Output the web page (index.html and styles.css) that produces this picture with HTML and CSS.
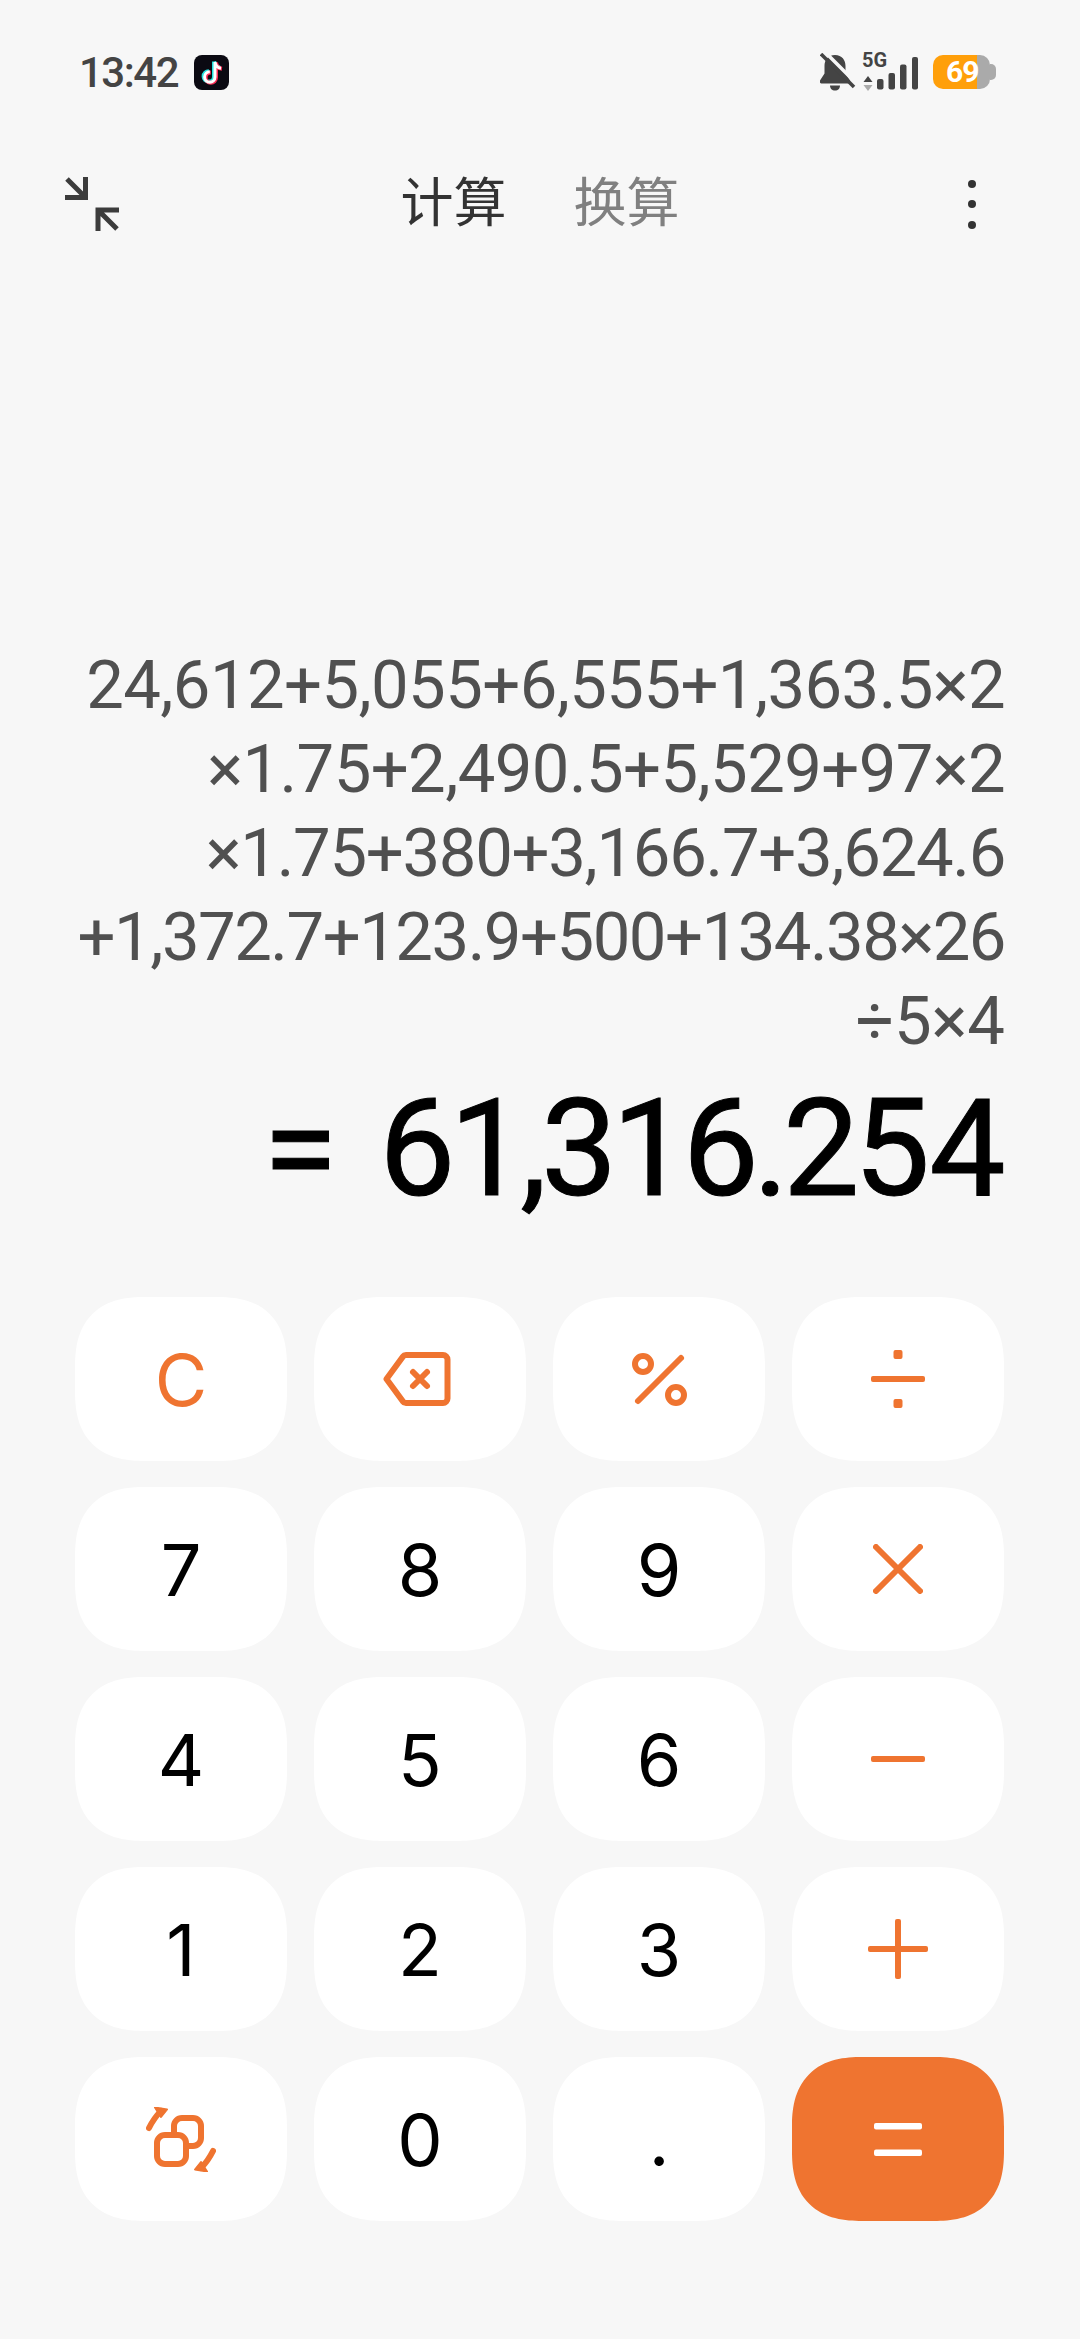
FILE: index.html
```html
<!DOCTYPE html>
<html lang="zh-CN">
  <head>
    <meta charset="UTF-8" />
    <meta name="viewport" content="width=device-width, initial-scale=1.0" />
    <title>计算器</title>
    <link rel="stylesheet" href="styles.css">
  </head>
  <body>
    <div class="status-bar">
      <div class="status-left">
        <span class="time">13:42</span>
        <svg class="app-icon" width="35" height="35" viewBox="0 0 35 35">
          <rect width="35" height="35" rx="8" fill="#0b0a12" />
          <path d="M21 7v15a5.200 5.200 0 1 1-5.200-5.200M21 7c.5 3.600 2.600 5.800 6 6.200" fill="none" stroke="#25e4e0" stroke-width="4" transform="translate(-1 -.6)" />
          <path d="M21 7v15a5.200 5.200 0 1 1-5.200-5.200M21 7c.5 3.600 2.600 5.800 6 6.200" fill="none" stroke="#fa2d55" stroke-width="4" transform="translate(1 .6)" />
          <path d="M21 7v15a5.200 5.200 0 1 1-5.200-5.200M21 7c.5 3.600 2.600 5.800 6 6.200" fill="none" stroke="#fff" stroke-width="3" />
        </svg>
      </div>
      <div class="status-right">
        <svg class="bell" width="36" height="38" viewBox="0 0 36 38">
          <path d="M15 2c-7 0-10.500 5-10.500 11v7.500L0 27.500c-.5 1.500 0 3 2 3h26c2 0 2.500-1.500 2-3l-4.500-7V13C25.500 7 22 2 15 2z" fill="#444" />
          <path d="M10 32.500h10c0 3-2 5-5 5s-5-2-5-5z" fill="#444" />
          <path d="M4.500 -1.500l34 34" stroke="#f7f7f7" stroke-width="3.500" />
          <path d="M1 1l33 33" stroke="#444" stroke-width="3.500" />
        </svg>
        <div class="network">
          <span class="net-type">5G</span>
          <svg width="56" height="38" viewBox="0 0 56 38">
            <path d="M6 23l4.500 6h-9z" fill="#444" />
            <path d="M6 38l-4.500-6h9z" fill="#aaa" />
            <rect x="15" y="26" width="6.500" height="10.500" rx="2" fill="#444" />
            <rect x="26.500" y="20" width="6.500" height="16.500" rx="2" fill="#444" />
            <rect x="38" y="11.500" width="6.500" height="25" rx="2" fill="#444" />
            <rect x="50" y="4" width="6" height="32.500" rx="2" fill="#444" />
          </svg>
        </div>
        <div class="battery"><span>69</span></div>
      </div>
    </div>

    <header class="top-bar">
      <svg class="collapse" width="54" height="54" viewBox="0 0 54 54">
        <path d="M2 2l18 18M20.500 0v20.500H0M33 54V33h21M33.500 33.500L52 52" fill="none" stroke="#3c3c3c" stroke-width="5" />
      </svg>
      <nav class="tabs">
        <a class="tab active" href="#">计算</a>
        <a class="tab" href="#">换算</a>
      </nav>
      <div class="more"><i></i><i></i><i></i></div>
    </header>

    <main class="display">
      <div class="expression">
        <div class="tight-sm">24,612+5,055+6,555+1,363.5×2</div>
        <div class="tight-sm">×1.75+2,490.5+5,529+97×2</div>
        <div class="tight-lg">×1.75+380+3,166.7+3,624.6</div>
        <div class="tight-xl">+1,372.7+123.9+500+134.38×26</div>
        <div>÷5×4</div>
      </div>
      <div class="result"><span class="result-eq">=</span>61,316.25<span class="result-last">4</span></div>
    </main>

    <section class="keypad">
      <button class="key op">C</button>
      <button class="key back">
        <svg width="68" height="54" viewBox="0 0 68 54" fill="none" stroke="#ef7430" stroke-linecap="round" stroke-linejoin="round">
          <path d="M3.500 27L20 4.500c.6-.9 1.500-1.500 3-1.500h37c2.500 0 4.500 2 4.500 4.500v39c0 2.500-2 4.500-4.500 4.500H23c-1.500 0-2.400-.6-3-1.500z" stroke-width="6" />
          <path d="M30 20l14 14M44 20L30 34" stroke-width="6" />
        </svg>
      </button>
      <button class="key">
        <svg width="55" height="53" viewBox="0 0 55 53" fill="none" stroke="#ef7430">
          <circle cx="11" cy="11" r="8" stroke-width="6" />
          <circle cx="44" cy="42" r="8" stroke-width="6" />
          <path d="M49 5L6 48" stroke-width="6" stroke-linecap="round" />
        </svg>
      </button>
      <button class="key">
        <svg width="54" height="58" viewBox="0 0 54 58" fill="#ef7430">
          <rect y="26" width="54" height="6" rx="2" />
          <rect x="22.500" y="0" width="9" height="9" rx="2" />
          <rect x="22.500" y="49" width="9" height="9" rx="2" />
        </svg>
      </button>

      <button class="key">7</button>
      <button class="key">8</button>
      <button class="key">9</button>
      <button class="key">
        <svg width="50" height="50" viewBox="0 0 50 50" fill="none" stroke="#ef7430" stroke-width="6" stroke-linecap="round">
          <path d="M3 3l44 44M47 3L3 47" />
        </svg>
      </button>

      <button class="key">4</button>
      <button class="key">5</button>
      <button class="key">6</button>
      <button class="key">
        <svg width="54" height="6" viewBox="0 0 54 6"><rect width="54" height="6" rx="2" fill="#ef7430" /></svg>
      </button>

      <button class="key">1</button>
      <button class="key">2</button>
      <button class="key">3</button>
      <button class="key">
        <svg width="60" height="60" viewBox="0 0 60 60" fill="#ef7430">
          <rect y="27" width="60" height="6" rx="2" />
          <rect x="27" width="6" height="60" rx="2" />
        </svg>
      </button>

      <button class="key">
        <svg width="70" height="65" viewBox="0 0 70 65" fill="none" stroke="#ef7430" stroke-width="6" stroke-linecap="round" stroke-linejoin="round">
          <rect x="11" y="28" width="29" height="29" rx="8" />
          <path d="M28 25v-6a8 8 0 0 1 8-8h11a8 8 0 0 1 8 8v12a8 8 0 0 1-8 8h-7" />
          <path d="M3 21Q8 11 15 4" />
          <path d="M9 .5L21 2.500L15 10z" fill="#ef7430" stroke-width="2" />
          <path d="M67 44Q62 54 55 61" />
          <path d="M61 64.500L49 62.500L55 55z" fill="#ef7430" stroke-width="2" />
        </svg>
      </button>
      <button class="key">0</button>
      <button class="key">.</button>
      <button class="key equals">
        <svg width="48" height="33" viewBox="0 0 48 33" fill="#fff">
          <rect width="48" height="6.500" rx="2" />
          <rect y="26.500" width="48" height="6.500" rx="2" />
        </svg>
      </button>
    </section>
  </body>
</html>
```
FILE: styles.css
```css
body {
  font-family: Roboto, "Noto Sans CJK SC", sans-serif;
  margin: 0;
  padding: 0;
  background-color: #f7f7f7;
  width: 1080px;
  height: 2339px;
  display: flex;
  flex-direction: column;
  overflow: hidden;
}

/* Status bar */
.status-bar {
  display: flex;
  justify-content: space-between;
  align-items: center;
  height: 40px;
  padding: 52px 84px 0 79px;
}

.status-left {
  display: flex;
  align-items: center;
  gap: 16px;
}

.time {
  font-size: 42px;
  font-weight: 500;
  letter-spacing: -1.500px;
  color: #444;
}

.status-right {
  display: flex;
  align-items: center;
  gap: 6px;
}

.network {
  position: relative;
  width: 56px;
  height: 38px;
}

.net-type {
  position: absolute;
  top: 0;
  left: 0;
  font-size: 20px;
  line-height: 15px;
  font-weight: 700;
  color: #444;
}

.battery {
  position: relative;
  width: 57px;
  height: 34px;
  margin-left: 9px;
  margin-right: 6px;
  border-radius: 10px;
  background: linear-gradient(to right, #ff9f0a 44px, #aaa 44px);
  color: #fff;
  font-size: 30px;
  font-weight: 700;
  letter-spacing: -1px;
  line-height: 34px;
}

.battery span {
  margin-left: 13px;
}

.battery::after {
  content: "";
  position: absolute;
  right: -6px;
  top: 9px;
  width: 6px;
  height: 16px;
  border-radius: 0 5px 5px 0;
  background-color: #aaa;
}

/* Top bar */
.top-bar {
  display: grid;
  grid-template-columns: 1fr auto 1fr;
  align-items: center;
  padding: 0 65px;
  margin-top: 80px;
}

.tabs {
  display: flex;
  gap: 67px;
}

.tab {
  font-size: 53px;
  line-height: 64px;
  color: #808080;
  text-decoration: none;
}

.tab.active {
  color: #333;
}

.more {
  justify-self: end;
  margin-right: 39px;
  display: flex;
  flex-direction: column;
  gap: 12.500px;
}

.more i {
  display: block;
  width: 8px;
  height: 8px;
  border-radius: 50%;
  background-color: #333;
}

/* Expression and result */
.display {
  flex-grow: 1;
  display: flex;
  flex-direction: column;
  justify-content: flex-end;
  padding: 0 75px 68px 0;
  text-align: right;
  white-space: nowrap;
}

.expression {
  font-size: 67px;
  line-height: 84px;
  color: #505050;
  margin-bottom: 6px;
}

.tight-sm {
  letter-spacing: -0.600px;
}

.tight-lg {
  letter-spacing: -1.300px;
}

.tight-xl {
  letter-spacing: -1.500px;
}

.result {
  font-size: 136px;
  line-height: 160px;
  letter-spacing: -5.800px;
  margin-right: 5px;
  color: #000;
  -webkit-text-stroke: 1px #000;
}

.result-eq {
  margin-right: 47px;
}

.result-last {
  margin-left: 5px;
}

/* Keypad */
.keypad {
  display: grid;
  grid-template-columns: repeat(4, 1fr);
  grid-auto-rows: 164px;
  gap: 26px 27px;
  padding: 0 76px 118px 75px;
}

.key {
  display: flex;
  justify-content: center;
  align-items: center;
  padding: 0;
  border: none;
  border-radius: 70px;
  corner-shape: superellipse(1.3);
  background-color: #fff;
  font-family: Inter, sans-serif;
  font-size: 72px;
  color: #000;
}

.key.op {
  color: #ef7430;
}

.key.back svg {
  margin-right: 7px;
}

.key.equals {
  background-color: #ef7430;
}
```
